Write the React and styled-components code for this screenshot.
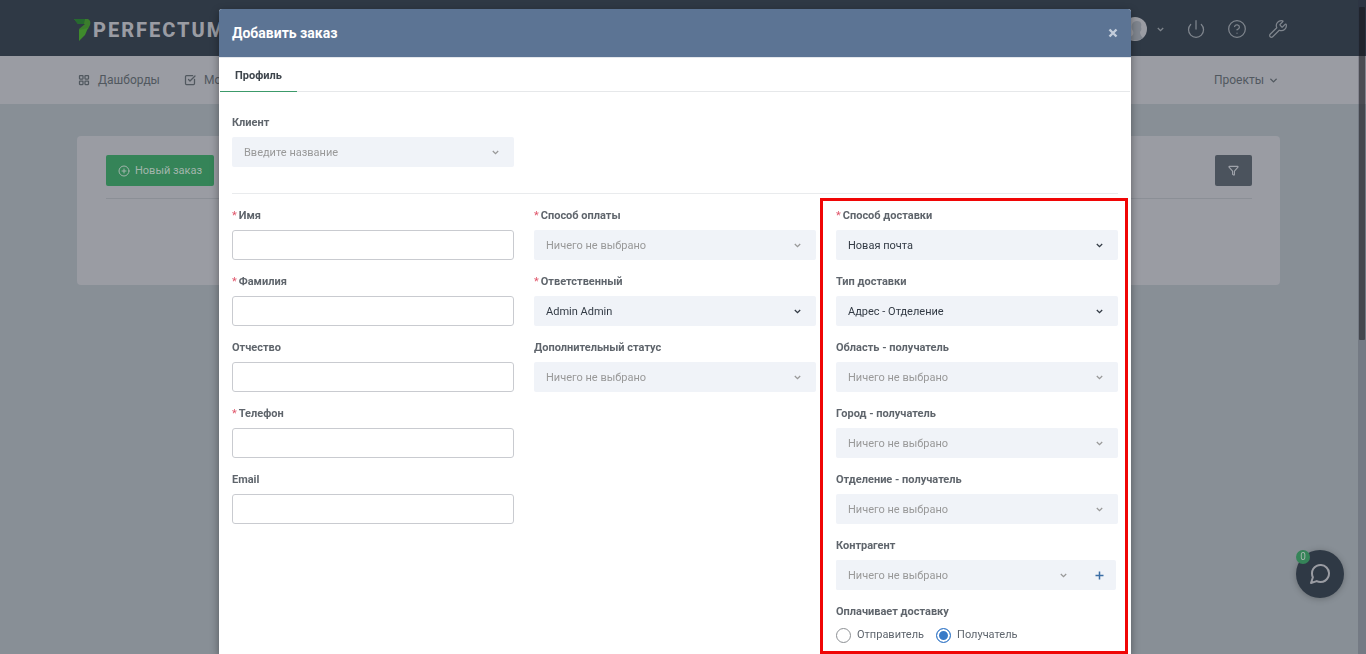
import React, { useId } from 'react';
import styled, { createGlobalStyle, css } from 'styled-components';
import {
  LayoutGrid,
  SquareCheckBig,
  CirclePlus,
  Power,
  CircleQuestionMark,
  Wrench,
  ChevronDown,
  Funnel,
} from 'lucide-react';

const GlobalStyle = createGlobalStyle`
  *, *::before, *::after { box-sizing: border-box; }
  html, body { margin: 0; overflow: hidden; }
  body {
    background: #888f96;
    font-family: Roboto, "Liberation Sans", sans-serif;
    font-size: 11px;
    line-height: 16px;
    color: #5f666e;
  }
  button, input, select { font: inherit; color: inherit; margin: 0; }
  button { cursor: pointer; border: 0; padding: 0; background: none; }
`;

/* Page behind the dialog */

const Page = styled.div`
  min-height: 100vh;
  padding-right: 9px;
`;

const TopBar = styled.header`
  height: 56px;
  margin-right: -9px;
  padding: 0 78px 0 74px;
  display: flex;
  align-items: center;
  justify-content: space-between;
  background: #2f3945;
  color: #8f949b;
`;

const Brand = styled.a`
  display: flex;
  align-items: center;
  gap: 2px;
  padding-top: 4px;
  color: #9a9ca3;
  font-size: 20px;
  line-height: 24px;
  font-weight: 800;
  letter-spacing: 2px;
  text-decoration: none;
`;

const TopActions = styled.div`
  display: flex;
  align-items: center;
  gap: 21px;
  padding-top: 2px;
`;

const IconButton = styled.button`
  display: flex;
  color: #7f858d;
`;

const UserButton = styled(IconButton)`
  align-items: center;
  gap: 8px;
`;

const SubNav = styled.nav`
  height: 48px;
  margin-right: -9px;
  padding: 0 87px 0 78px;
  display: flex;
  align-items: center;
  gap: 24px;
  background: #9a9ca3;
`;

const NavLink = styled.a`
  display: flex;
  align-items: center;
  gap: 8px;
  color: #51585f;
  font-size: 12px;
  text-decoration: none;
  white-space: nowrap;
  ${({ $end }) => $end && css`margin-left: auto; gap: 4px;`}
`;

const Card = styled.main`
  height: 149px;
  margin: 32px 77px;
  padding: 19px 28px 0 29px;
  border-radius: 4px;
  background: #9a9ca3;
`;

const CardTools = styled.div`
  display: flex;
  justify-content: space-between;
  padding-bottom: 12px;
  border-bottom: 1px solid #8b8f96;
`;

const NewOrder = styled.button`
  display: flex;
  align-items: center;
  gap: 5px;
  height: 31px;
  padding: 0 12px;
  border-radius: 2px;
  background: #358458;
  color: #a3b5ac;
`;

const FilterButton = styled.button`
  display: flex;
  align-items: center;
  justify-content: center;
  width: 37px;
  height: 31px;
  border-radius: 2px;
  background: #4b535d;
  color: #9fa3aa;
`;

const ScrollTrack = styled.div`
  position: fixed;
  inset: 0 0 0 auto;
  width: 8px;
  padding: 7px 1px 0;
  background: rgba(40, 42, 60, 0.2);
`;

const ScrollThumb = styled.div`
  height: 333px;
  border-radius: 1px;
  background: rgba(20, 20, 24, 0.5);
`;

const Chat = styled.button`
  position: fixed;
  right: 22px;
  bottom: 56px;
  display: flex;
  align-items: center;
  justify-content: center;
  width: 48px;
  height: 48px;
  border-radius: 50%;
  background: #2f3945;
  color: #9a9ca3;
  box-shadow: 0 1px 6px rgba(0, 0, 0, 0.25);
`;

const ChatBadge = styled.span`
  position: absolute;
  top: 0;
  left: 0;
  width: 14px;
  height: 14px;
  border-radius: 50%;
  background: #358458;
  color: #a3b5ac;
  font-size: 10px;
  line-height: 14px;
  text-align: center;
`;

/* Dialog */

const Overlay = styled.div`
  position: fixed;
  inset: 0;
  padding: 9px 16px 0 0;
  overflow: hidden;
`;

const Dialog = styled.section`
  max-width: 912px;
  min-height: 100%;
  margin: 0 auto;
  border-radius: 3px 3px 0 0;
  background: #fff;
  box-shadow: 0 3px 9px rgba(0, 0, 0, 0.4);
`;

const DialogHead = styled.header`
  display: flex;
  align-items: center;
  justify-content: space-between;
  height: 48px;
  padding: 0 13px;
  border-radius: 3px 3px 0 0;
  background: #5c7494;
  color: #fff;
`;

const DialogTitle = styled.h1`
  margin: 0;
  font-size: 14px;
  line-height: 20px;
  font-weight: 700;
`;

const CloseButton = styled.button`
  display: flex;
  color: #c3cddb;
`;

const Tabs = styled.div`
  display: flex;
  padding: 0 1px;
  border-top: 1px solid #e4e7ec;
`;

const TabRule = styled.div`
  flex: 1;
  border-bottom: 1px solid #e6e8ea;
`;

const Tab = styled.button`
  height: 34px;
  padding: 2px 15px 0;
  border-bottom: 1px solid #3c9a6a;
  color: #3e454c;
  font-weight: 700;
`;

const Form = styled.form`
  padding: 22px 13px 0;
`;

const Columns = styled.div`
  display: grid;
  grid-template-columns: repeat(3, minmax(0, 1fr));
  gap: 20px;
`;

const ClientRow = styled(Columns)`
  padding-bottom: 26px;
  border-bottom: 1px solid #e9ebed;
`;

const Column = styled.div`
  position: relative;
  display: flex;
  flex-direction: column;
  gap: 13px;
  padding-top: 13px;
`;

const HighlightColumn = styled(Column)`
  &::after {
    content: "";
    position: absolute;
    inset: 4px -10px auto -16px;
    height: 456px;
    border: 3px solid #f00606;
    pointer-events: none;
  }
`;

const FieldBox = styled.div`
  display: flex;
  flex-direction: column;
  gap: 5px;
`;

const labelText = css`
  color: #5f656c;
  line-height: 18px;
  font-weight: 700;
`;

const Label = styled.label`
  ${labelText}
`;

const Required = styled.span`
  margin-right: 2px;
  color: #e0566b;
  font-weight: 400;
`;

const TextInput = styled.input`
  width: 100%;
  height: 30px;
  padding: 0 12px;
  border: 1px solid #c9cbd0;
  border-radius: 3px;
  background: #fff;
`;

const SelectBox = styled.div`
  display: grid;
  flex: 1;
  align-items: center;
  border-radius: 2px;
  background: #f0f3f8;
  color: ${({ $empty }) => ($empty ? '#999' : '#333b45')};

  & > * { grid-area: 1 / 1; }
  & > svg { justify-self: end; margin-right: 14px; pointer-events: none; }
`;

const NativeSelect = styled.select`
  width: 100%;
  height: 30px;
  padding: 2px 32px 0 12px;
  border: 0;
  appearance: none;
  background: transparent;
`;

const SelectWithAdd = styled.div`
  display: flex;
  margin-right: 2px;
  border-radius: 2px;
  background: #f0f3f8;
`;

const AddButton = styled.button`
  width: 34px;
  height: 30px;
  display: flex;
  align-items: center;
  justify-content: center;
  color: #3b6ea5;
`;

const RadioSet = styled.fieldset`
  margin: 0;
  padding: 0;
  border: 0;
`;

const Legend = styled.legend`
  padding: 0;
  ${labelText}
`;

const RadioRow = styled.div`
  display: flex;
  gap: 12px;
  padding-top: 5px;
`;

const RadioLabel = styled.label`
  display: flex;
  align-items: center;
  gap: 6px;
  color: #5f666e;
  line-height: 18px;
`;

const Radio = styled.input`
  appearance: none;
  width: 15px;
  height: 15px;
  border: 1px solid #8c8f93;
  border-radius: 50%;
  background: #fff;

  &:checked {
    border-color: #3a7bc8;
    background: #3a7bc8;
    box-shadow: inset 0 0 0 2px #fff;
  }
`;

function BrandMark() {
  return (
    <svg width="17" height="24" viewBox="0 0 17 24" aria-hidden="true">
      <path d="M0 1H14C16 2 17 4 16 7L14 11L5 14V11L11 6H4Z" fill="#3b7d2c" />
      <path d="M0 1H11L10 6H4Z" fill="#266a2f" />
      <path d="M5 12L14 10L11 17L5 23Z" fill="#3f8a2c" />
    </svg>
  );
}

function Avatar() {
  return (
    <svg width="25" height="25" viewBox="0 0 25 25" aria-hidden="true">
      <circle cx="12" cy="12" r="12" fill="#9a9ca3" />
      <path d="M14 4C18 4 19 7 18 10C19 12 18 14 17 15C17 18 19 20 20 21C16 24 9 24 5 21C10 19 11 17 10 14C7 10 9 4 14 4Z" fill="#80868f" />
    </svg>
  );
}

function ChatGlyph() {
  return (
    <svg width="24" height="24" viewBox="0 0 24 24" fill="none" stroke="currentColor" strokeWidth="2" strokeLinecap="round" strokeLinejoin="round" aria-hidden="true">
      <path d="M21 11.5a8.38 8.38 0 0 1-.9 3.8 8.5 8.5 0 0 1-7.6 4.7 8.38 8.38 0 0 1-3.8-.9L3 21l1.9-5.7a8.38 8.38 0 0 1-.9-3.8 8.5 8.5 0 0 1 4.7-7.6 8.38 8.38 0 0 1 3.8-.9h.5a8.48 8.48 0 0 1 8 8v.5z" />
    </svg>
  );
}

function CloseGlyph() {
  return (
    <svg width="10" height="10" viewBox="0 0 10 10" stroke="currentColor" strokeWidth="2.4" aria-hidden="true">
      <path d="M1.5 1.5L8.5 8.5M8.5 1.5L1.5 8.5" />
    </svg>
  );
}

function SmallChevron() {
  return (
    <svg width="9" height="9" viewBox="0 0 9 9" fill="none" stroke="currentColor" strokeWidth="1.3" aria-hidden="true">
      <path d="M1.8 3L4.5 5.7L7.2 3" />
    </svg>
  );
}

function LabelFor({ id, required, children }) {
  return (
    <Label htmlFor={id}>
      {required && <Required>*</Required>}
      {children}
    </Label>
  );
}

function TextField({ label, required, type = 'text' }) {
  const id = useId();
  return (
    <FieldBox>
      <LabelFor id={id} required={required}>{label}</LabelFor>
      <TextInput id={id} type={type} />
    </FieldBox>
  );
}

function SelectField({ label, required, value, placeholder = 'Ничего не выбрано', addable }) {
  const id = useId();
  const control = (
    <SelectBox $empty={!value}>
      <NativeSelect id={id}>
        <option>{value || placeholder}</option>
      </NativeSelect>
      <SmallChevron />
    </SelectBox>
  );
  return (
    <FieldBox>
      <LabelFor id={id} required={required}>{label}</LabelFor>
      {addable ? (
        <SelectWithAdd>
          {control}
          <AddButton type="button" aria-label="Добавить">
            <svg width="9" height="9" viewBox="0 0 9 9" stroke="currentColor" strokeWidth="1.5" aria-hidden="true">
              <path d="M4.5 0.5V8.5M0.5 4.5H8.5" />
            </svg>
          </AddButton>
        </SelectWithAdd>
      ) : control}
    </FieldBox>
  );
}

export default function App() {
  return (
    <>
      <GlobalStyle />
      <Page>
        <TopBar>
          <Brand href="#"><BrandMark />PERFECTUM</Brand>
          <TopActions>
            <UserButton aria-label="Профиль"><Avatar /><SmallChevron /></UserButton>
            <IconButton aria-label="Выход"><Power size={20} strokeWidth={1.5} /></IconButton>
            <IconButton aria-label="Помощь"><CircleQuestionMark size={20} strokeWidth={1.5} /></IconButton>
            <IconButton aria-label="Настройки"><Wrench size={20} strokeWidth={1.5} /></IconButton>
          </TopActions>
        </TopBar>
        <SubNav>
          <NavLink href="#"><LayoutGrid size={12} strokeWidth={2.5} />Дашборды</NavLink>
          <NavLink href="#"><SquareCheckBig size={12} strokeWidth={2.5} />Мои</NavLink>
          <NavLink href="#" $end>Проекты<ChevronDown size={11} strokeWidth={3} /></NavLink>
        </SubNav>
        <Card>
          <CardTools>
            <NewOrder><CirclePlus size={12} />Новый заказ</NewOrder>
            <FilterButton aria-label="Фильтр"><Funnel size={11} strokeWidth={2.5} /></FilterButton>
          </CardTools>
        </Card>
      </Page>
      <ScrollTrack><ScrollThumb /></ScrollTrack>
      <Chat aria-label="Чат"><ChatGlyph /><ChatBadge>0</ChatBadge></Chat>

      <Overlay>
        <Dialog role="dialog" aria-labelledby="order-title">
          <DialogHead>
            <DialogTitle id="order-title">Добавить заказ</DialogTitle>
            <CloseButton aria-label="Закрыть"><CloseGlyph /></CloseButton>
          </DialogHead>
          <Tabs>
            <Tab type="button">Профиль</Tab>
            <TabRule />
          </Tabs>
          <Form>
            <ClientRow>
              <SelectField label="Клиент" placeholder="Введите название" />
            </ClientRow>
            <Columns>
              <Column>
                <TextField label="Имя" required />
                <TextField label="Фамилия" required />
                <TextField label="Отчество" />
                <TextField label="Телефон" required type="tel" />
                <TextField label="Email" type="email" />
              </Column>
              <Column>
                <SelectField label="Способ оплаты" required />
                <SelectField label="Ответственный" required value="Admin Admin" />
                <SelectField label="Дополнительный статус" />
              </Column>
              <HighlightColumn>
                <SelectField label="Способ доставки" required value="Новая почта" />
                <SelectField label="Тип доставки" value="Адрес - Отделение" />
                <SelectField label="Область - получатель" />
                <SelectField label="Город - получатель" />
                <SelectField label="Отделение - получатель" />
                <SelectField label="Контрагент" addable />
                <RadioSet>
                  <Legend>Оплачивает доставку</Legend>
                  <RadioRow>
                    <RadioLabel><Radio type="radio" name="payer" />Отправитель</RadioLabel>
                    <RadioLabel><Radio type="radio" name="payer" defaultChecked />Получатель</RadioLabel>
                  </RadioRow>
                </RadioSet>
              </HighlightColumn>
            </Columns>
          </Form>
        </Dialog>
      </Overlay>
    </>
  );
}
